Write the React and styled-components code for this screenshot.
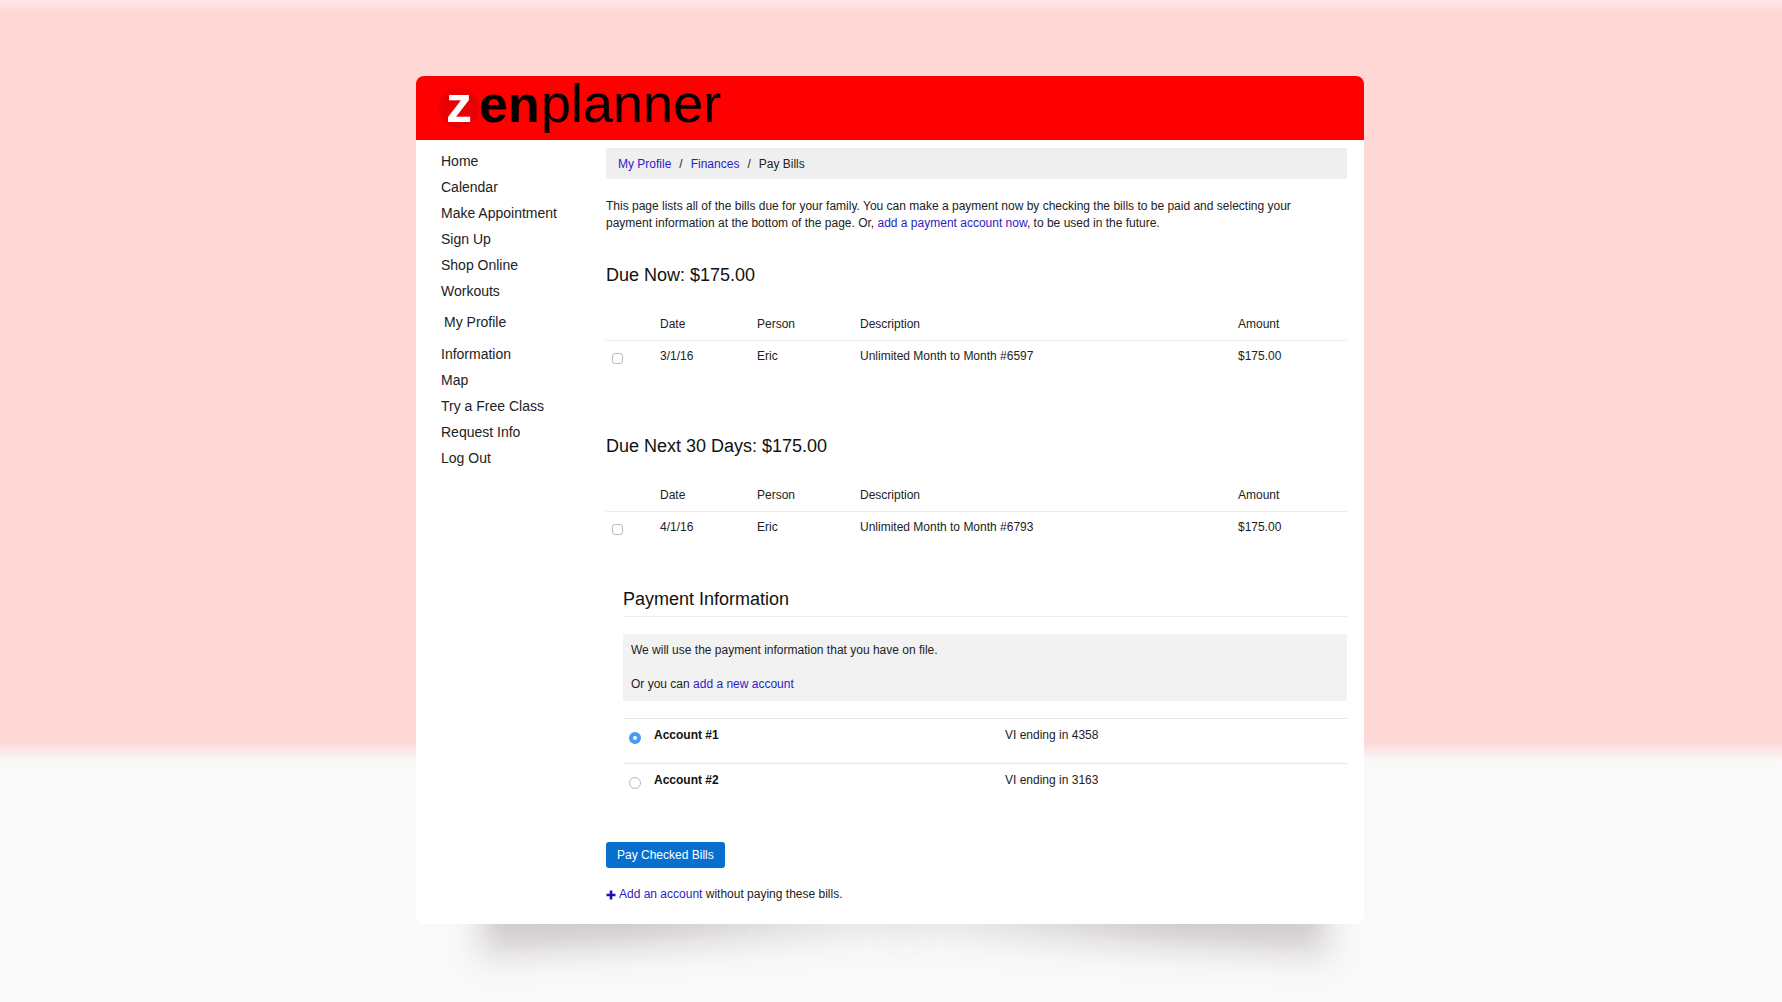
import styled, { createGlobalStyle } from "styled-components";
import { useState } from "react";

const navTop = ["Home", "Calendar", "Make Appointment", "Sign Up", "Shop Online", "Workouts"];
const navBottom = ["Information", "Map", "Try a Free Class", "Request Info", "Log Out"];

const bills = [
  {
    title: "Due Now: $175.00",
    rows: [{ id: "6597", date: "3/1/16", person: "Eric", description: "Unlimited Month to Month #6597", amount: "$175.00" }],
  },
  {
    title: "Due Next 30 Days: $175.00",
    rows: [{ id: "6793", date: "4/1/16", person: "Eric", description: "Unlimited Month to Month #6793", amount: "$175.00" }],
  },
];

const accounts = [
  { id: "account-1", name: "Account #1", card: "VI ending in 4358" },
  { id: "account-2", name: "Account #2", card: "VI ending in 3163" },
];

const Logo = () => (
  <LogoSvg width="300" height="64" viewBox="0 0 300 64" role="img" aria-label="zenplanner">
    <circle cx="23" cy="32" r="20" fill="#e80005" />
    <text x="23" y="46" textAnchor="middle" fontSize="52" fontWeight="700" fill="#fff">z</text>
    <text x="43" y="46" fontSize="52" fontWeight="700">en</text>
    <text x="105" y="46" fontSize="54">planner</text>
  </LogoSvg>
);

const BillTable = ({ title, rows }) => (
  <Section>
    <Title>{title}</Title>
    <Table>
      <thead>
        <tr>
          <th className="check" aria-label="Select" />
          <th className="date">Date</th>
          <th className="person">Person</th>
          <th>Description</th>
          <th className="amount">Amount</th>
        </tr>
      </thead>
      <tbody>
        {rows.map((row) => (
          <tr key={row.id}>
            <td>
              <Checkbox type="checkbox" aria-label={row.description} />
            </td>
            <td>{row.date}</td>
            <td>{row.person}</td>
            <td>{row.description}</td>
            <td>{row.amount}</td>
          </tr>
        ))}
      </tbody>
    </Table>
  </Section>
);

const App = () => {
  const [account, setAccount] = useState("account-1");

  return (
    <Page>
      <GlobalStyle />
      <Card>
        <Header>
          <Logo />
        </Header>
        <Body>
          <Nav>
            {navTop.map((item) => (
              <NavLink key={item} href="#">{item}</NavLink>
            ))}
            <NavLink href="#" $current>My Profile</NavLink>
            {navBottom.map((item) => (
              <NavLink key={item} href="#">{item}</NavLink>
            ))}
          </Nav>
          <Content>
            <Breadcrumb>
              <Link href="#">My Profile</Link>
              <span>/</span>
              <Link href="#">Finances</Link>
              <span>/</span>
              <span>Pay Bills</span>
            </Breadcrumb>
            <Intro>
              This page lists all of the bills due for your family. You can make a payment now by checking the bills to
              be paid and selecting your payment information at the bottom of the page. Or,{" "}
              <Link href="#">add a payment account now</Link>, to be used in the future.
            </Intro>
            {bills.map((bill) => (
              <BillTable key={bill.title} {...bill} />
            ))}
            <Payment>
              <Title $ruled>Payment Information</Title>
              <Notice>
                <p>We will use the payment information that you have on file.</p>
                <p>
                  Or you can <Link href="#">add a new account</Link>
                </p>
              </Notice>
              {accounts.map(({ id, name, card }) => (
                <Account key={id} htmlFor={id}>
                  <Radio
                    type="radio"
                    name="account"
                    id={id}
                    checked={account === id}
                    onChange={() => setAccount(id)}
                  />
                  <strong>{name}</strong>
                  <span>{card}</span>
                </Account>
              ))}
            </Payment>
            <PayButton type="button">Pay Checked Bills</PayButton>
            <AddAccount>
              <svg width="10" height="10" viewBox="0 0 10 10" aria-hidden="true">
                <path d="M5 0.5V9.5M0.5 5H9.5" stroke="#1c10b8" strokeWidth="2.6" />
              </svg>
              <span>
                <Link href="#">Add an account</Link> without paying these bills.
              </span>
            </AddAccount>
          </Content>
        </Body>
      </Card>
    </Page>
  );
};

const GlobalStyle = createGlobalStyle`
  * {
    box-sizing: border-box;
  }

  body {
    margin: 0;
    color: #222;
    font-family: "Liberation Sans", Arial, sans-serif;
    font-size: 12px;
    line-height: 17px;
  }

  p {
    margin: 0;
  }
`;

const Page = styled.div`
  isolation: isolate;
  min-height: 100vh;
  padding: 76px 26px 78px 24px;
  background: linear-gradient(#ffe3e5 4px, #fed8d7 12px, #fed8d7 74%, #f9f9f9 76%);
`;

const Card = styled.main`
  position: relative;
  max-width: 948px;
  margin: 0 auto;

  /* soft shadow under both lower corners */
  &::before,
  &::after {
    content: "";
    position: absolute;
    z-index: -1;
    bottom: -18px;
    width: 46%;
    height: 60px;
    filter: blur(16px);
  }

  &::before {
    left: 7%;
    background: linear-gradient(to right, rgb(80, 60, 65, 0.24) 40%, rgb(80, 60, 65, 0.08));
    transform: skewY(-3deg);
  }

  &::after {
    right: 4%;
    background: linear-gradient(to left, rgb(80, 60, 65, 0.24) 40%, rgb(80, 60, 65, 0.08));
    transform: skewY(3deg);
  }
`;

const Header = styled.header`
  display: flex;
  height: 64px;
  padding-left: 20px;
  border-radius: 8px 8px 0 0;
  background: #fe0000;
`;

const LogoSvg = styled.svg`
  overflow: visible;
  font-family: "Liberation Sans", Arial, sans-serif;
`;

const Body = styled.div`
  display: flex;
  padding: 8px 17px 21px 25px;
  border-radius: 0 0 8px 8px;
  background: #fff;
`;

const Nav = styled.nav`
  display: flex;
  flex-direction: column;
  flex: 0 0 165px;
`;

const NavLink = styled.a`
  padding: ${({ $current }) => ($current ? "5px 3px 6px" : "0")};
  color: #222;
  font-size: 14px;
  line-height: 26px;
  text-decoration: none;
`;

const Content = styled.div`
  flex: 1;
  min-width: 0;
`;

const Link = styled.a`
  color: #2c1cc4;
  text-decoration: none;
`;

const Breadcrumb = styled.nav`
  display: flex;
  gap: 8px;
  padding: 8px 12px 6px;
  background: #efefef;
`;

const Intro = styled.p`
  max-width: 710px;
  padding: 19px 0 31px;
`;

const Section = styled.section`
  & + & {
    margin-top: 62px;
  }
`;

const Title = styled.h2`
  margin: 0;
  padding-bottom: ${({ $ruled }) => ($ruled ? "5px" : "22px")};
  border-bottom: ${({ $ruled }) => ($ruled ? "1px solid #ededed" : "none")};
  color: #111;
  font-size: 18px;
  font-weight: 400;
  line-height: 24px;
`;

const Table = styled.table`
  width: 100%;
  border-collapse: collapse;
  table-layout: fixed;

  th,
  td {
    height: 32px;
    padding: 0;
    font-weight: 400;
    text-align: left;
  }

  th {
    height: 31px;
    border-bottom: 1px solid #ebebeb;
  }

  .check {
    width: 54px;
  }

  .date {
    width: 97px;
  }

  .person {
    width: 103px;
  }

  .amount {
    width: 109px;
  }
`;

const Checkbox = styled.input`
  display: block;
  appearance: none;
  width: 11px;
  height: 11px;
  margin: 4px 0 0 6px;
  border: 1px solid #bbb;
  border-radius: 3px;
  background: #fff;

  &:checked {
    background: #4a9df5;
  }
`;

const Payment = styled.section`
  margin-top: 44px;
  padding-left: 17px;
`;

const Notice = styled.div`
  display: grid;
  gap: 17px;
  margin: 17px 0;
  padding: 8px;
  background: #f2f2f2;
`;

const Account = styled.label`
  display: grid;
  grid-template-columns: 31px 351px 1fr;
  align-items: start;
  height: 45px;
  padding-top: 8px;
  border-top: 1px solid #e6e6e6;

  strong {
    color: #111;
  }
`;

const Radio = styled.input`
  appearance: none;
  width: 12px;
  height: 12px;
  margin: 5px 0 0 6px;
  border: 1px solid #bbb;
  border-radius: 50%;
  background: #fff;

  &:checked {
    border: 4px solid #439af5;
  }
`;

const PayButton = styled.button`
  display: block;
  margin-top: 34px;
  padding: 0 11px;
  border: none;
  border-radius: 3px;
  background: #0770cf;
  color: #fff;
  font-family: inherit;
  font-size: 12px;
  font-weight: 400;
  line-height: 26px;
`;

const AddAccount = styled.p`
  display: flex;
  align-items: center;
  gap: 3px;
  margin-top: 18px;
`;

export default App;
